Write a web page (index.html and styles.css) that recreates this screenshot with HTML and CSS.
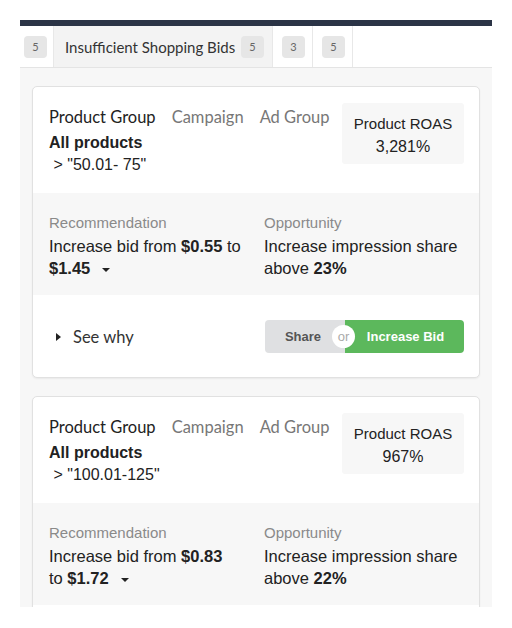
FILE: index.html
```html
<!DOCTYPE html>
<html>
<head>
<meta charset="utf-8">
<link rel="stylesheet" href="styles.css">
</head>
<body>
<div class="frame">
  <div class="topbar"></div>
  <div class="tabs">
    <div class="tab tab-first"><span class="badge">5</span></div>
    <div class="tab tab-active"><span class="tab-label">Insufficient Shopping Bids</span><span class="badge">5</span></div>
    <div class="tab tab-small"><span class="badge">3</span></div>
    <div class="tab tab-small"><span class="badge">5</span></div>
  </div>
  <div class="list">
    <div class="card">
      <div class="card-top">
        <div class="info">
          <div class="levels">
            <span class="level level-on">Product Group</span>
            <span class="level">Campaign</span>
            <span class="level">Ad Group</span>
          </div>
          <div class="product"><b>All products</b><br>&nbsp;&gt; "50.01- 75"</div>
        </div>
        <div class="roas">
          <div class="roas-label">Product ROAS</div>
          <div class="roas-value">3,281%</div>
        </div>
      </div>
      <div class="card-mid">
        <div class="col col-rec">
          <div class="label">Recommendation</div>
          <div class="value">Increase bid from <b>$0.55</b> to <b>$1.45</b><span class="caret"></span></div>
        </div>
        <div class="col col-opp">
          <div class="label">Opportunity</div>
          <div class="value">Increase impression share above <b>23%</b></div>
        </div>
      </div>
      <div class="card-bottom">
        <div class="see-why"><span class="tri-right"></span>See why</div>
        <div class="btn-group">
          <span class="btn btn-share">Share</span>
          <span class="btn btn-bid">Increase Bid</span>
          <span class="or">or</span>
        </div>
      </div>
    </div>
    <div class="card">
      <div class="card-top">
        <div class="info">
          <div class="levels">
            <span class="level level-on">Product Group</span>
            <span class="level">Campaign</span>
            <span class="level">Ad Group</span>
          </div>
          <div class="product"><b>All products</b><br>&nbsp;&gt; "100.01-125"</div>
        </div>
        <div class="roas">
          <div class="roas-label">Product ROAS</div>
          <div class="roas-value">967%</div>
        </div>
      </div>
      <div class="card-mid">
        <div class="col col-rec">
          <div class="label">Recommendation</div>
          <div class="value">Increase bid from <b>$0.83</b> to&nbsp;<b>$1.72</b><span class="caret"></span></div>
        </div>
        <div class="col col-opp">
          <div class="label">Opportunity</div>
          <div class="value">Increase impression share above <b>22%</b></div>
        </div>
      </div>
      <div class="card-bottom">
        <div class="see-why"><span class="tri-right"></span>See why</div>
        <div class="btn-group">
          <span class="btn btn-share">Share</span>
          <span class="btn btn-bid">Increase Bid</span>
          <span class="or">or</span>
        </div>
      </div>
    </div>
  </div>
</div>
</body>
</html>
```

FILE: styles.css
```css
* { box-sizing: border-box; }
html, body { margin: 0; padding: 0; background: #ffffff; }
body { font-family: "Liberation Sans", Arial, sans-serif; color: #222; }

.frame {
  margin: 20px 0 0 20px;
  width: 472px;
  height: 587px;
  overflow: hidden;
  background: #f7f7f7;
}
.topbar { height: 6px; background: #2b3446; }

.tabs {
  display: flex;
  height: 42px;
  background: #fff;
  border-bottom: 1px solid #e4e4e4;
}
.tab {
  display: flex;
  align-items: center;
  border-right: 1px solid #e8e8e8;
  font-family: Lato, sans-serif;
  white-space: nowrap;
}
.tab-first { width: 34px; padding-left: 4px; }
.tab-active { width: 219px; background: #f3f3f3; padding: 0 8px 0 11px; justify-content: space-between; }
.tab-small { width: 40px; padding-left: 9px; }
.tab-label { font-size: 15px; color: #333; }
.badge {
  display: inline-flex;
  align-items: center;
  justify-content: center;
  width: 23px;
  height: 22px;
  border-radius: 4px;
  background: #e6e6e6;
  color: #666;
  font-size: 11px;
  flex: none;
}

.list { padding: 18px 12px; display: flex; flex-direction: column; gap: 18px; }

.card {
  background: #fff;
  border: 1px solid #e1e1e1;
  border-radius: 5px;
  box-shadow: 0 1px 2px rgba(0,0,0,0.06);
  overflow: hidden;
}
.card-top {
  display: flex;
  justify-content: space-between;
  padding: 16px 15px 17px 16px;
}
.info { padding-top: 3px; }
.levels { display: flex; gap: 16px; font-family: Lato, sans-serif; font-size: 16.5px; line-height: 22px; color: #777; margin-bottom: 4px; white-space: nowrap; }
.level-on { color: #222; }
.product { font-size: 16px; line-height: 22px; color: #222; }

.roas {
  width: 122px;
  height: 61px;
  background: #f7f7f7;
  border-radius: 3px;
  text-align: center;
  line-height: 23px;
  padding-top: 9px;
  color: #222;
}
.roas-label { font-size: 15px; }
.roas-value { font-size: 16px; }

.card-mid {
  display: flex;
  background: #f7f7f7;
  padding: 19px 15px 16px 16px;
}
.col-rec { width: 215px; padding-right: 10px; flex: none; }
.col-opp { flex: 1; }
.label { font-size: 15px; line-height: 22px; color: #8a8a8a; margin-bottom: 1px; }
.value { font-size: 16.5px; line-height: 22px; color: #222; }
.caret {
  display: inline-block;
  width: 0; height: 0;
  border-left: 4px solid transparent;
  border-right: 4px solid transparent;
  border-top: 4px solid #222;
  margin-left: 12px;
  vertical-align: middle;
}

.card-bottom {
  display: flex;
  align-items: center;
  justify-content: space-between;
  padding: 25px 15px 24px 16px;
}
.see-why {
  display: flex;
  align-items: center;
  font-family: Lato, sans-serif;
  font-size: 16.5px;
  color: #333;
}
.tri-right {
  width: 0; height: 0;
  border-top: 4px solid transparent;
  border-bottom: 4px solid transparent;
  border-left: 5px solid #222;
  margin: 0 12px 0 7px;
}
.btn-group {
  position: relative;
  display: flex;
  width: 199px;
  height: 33px;
  border-radius: 4px;
  overflow: hidden;
  font-size: 13px;
  font-weight: bold;
}
.btn { display: flex; align-items: center; justify-content: center; }
.btn-share { width: 80px; background: #dfe0e2; color: #555; padding-right: 4px; }
.btn-bid { flex: 1; background: #5cb85c; color: #fff; padding-left: 2px; }
.or {
  position: absolute;
  left: 67px;
  top: 5px;
  width: 23px;
  height: 23px;
  border-radius: 50%;
  background: #fff;
  color: #aaa;
  font-weight: normal;
  font-size: 13px;
  display: flex;
  align-items: center;
  justify-content: center;
}
```
